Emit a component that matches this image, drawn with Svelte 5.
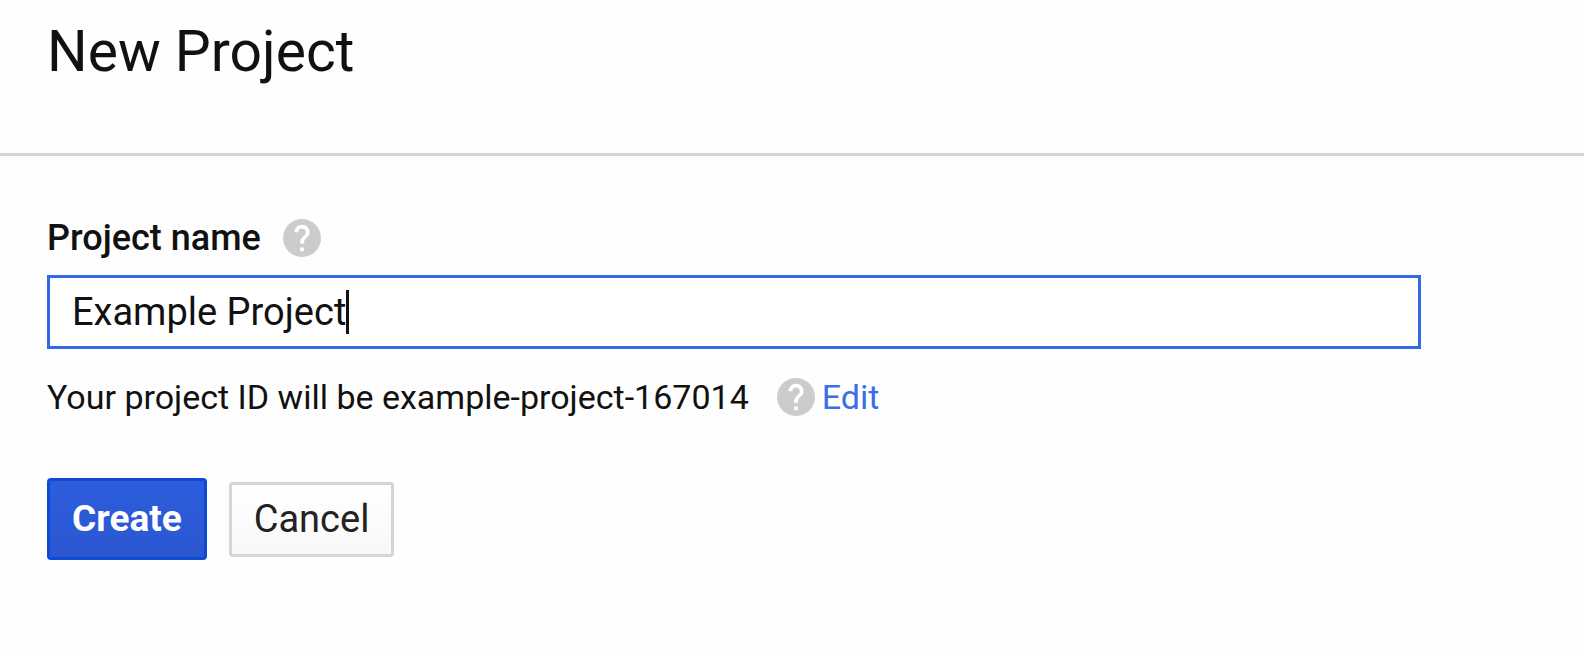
<script>
    let projectName = 'Example Project';
    let projectId = 'example-project-167014';
</script>

{#snippet helpIcon()}
    <svg viewBox="2 2 20 20" aria-hidden="true">
        <circle cx="12" cy="12" r="10" fill="#ccc" />
        <path d="M13 19h-2v-2h2v2zm2.07-7.75l-.9.92C13.45 12.9 13 13.5 13 15h-2v-.5c0-1.1.45-2.1 1.17-2.83l1.24-1.26c.37-.36.59-.86.59-1.41 0-1.1-.9-2-2-2s-2 .9-2 2H8c0-2.21 1.79-4 4-4s4 1.79 4 4c0 .88-.36 1.68-.93 2.25z" fill="#fff" />
    </svg>
{/snippet}

<header>
    <h1>New Project</h1>
</header>

<main>
    <form on:submit|preventDefault>
        <div class="row">
            <label for="project-name">Project name</label>
            <button type="button" class="help" aria-label="About project names">{@render helpIcon()}</button>
        </div>

        <div class="field">
            <input id="project-name" type="text" bind:value={projectName} />
            <span class="caret"></span>
        </div>

        <div class="row project-id">
            <span>Your project ID will be {projectId}</span>
            <button type="button" class="help" aria-label="About project IDs">{@render helpIcon()}</button>
            <a href="#edit">Edit</a>
        </div>

        <div class="actions">
            <button type="submit" class="create">Create</button>
            <button type="button" class="cancel">Cancel</button>
        </div>
    </form>
</main>

<style>
    :global(body) {
        background: #fefefe;
        color: #111;
        font-family: Roboto, sans-serif;
        font-size: 34px;
        line-height: 40px;
    }

    header {
        padding: 20px 47px 69px;
        border-bottom: 3px solid #d5d5d5;
    }

    h1 {
        margin: 0;
        font-size: 57px;
        font-weight: 400;
        line-height: 64px;
    }

    main {
        padding: 62px 163px 62px 47px;
    }

    .row {
        display: flex;
        align-items: center;
    }

    label {
        font-size: 36px;
        font-weight: 500;
    }

    .help {
        width: 38px;
        height: 38px;
        margin-left: 22px;
        padding: 0;
        border: 0;
        background: none;
    }

    .project-id .help {
        margin-left: 28px;
    }

    .help svg {
        display: block;
        width: 38px;
        height: 38px;
    }

    .field {
        display: flex;
        align-items: center;
        margin-top: 17px;
        padding: 12px 22px;
        border: 3px solid #3367e8;
        background: #fff;
    }

    input {
        field-sizing: content;
        height: 44px;
        padding: 0;
        border: 0;
        outline: 0;
        background: none;
        color: inherit;
        font: inherit;
        font-size: 38px;
    }

    .caret {
        width: 3px;
        height: 44px;
        background: #111;
    }

    .project-id {
        margin-top: 28px;
    }

    a {
        margin-left: 7px;
        color: #3b6ee8;
        text-decoration: none;
    }

    .actions {
        display: flex;
        align-items: center;
        gap: 22px;
        margin-top: 61px;
    }

    .create,
    .cancel {
        padding: 0 22px;
        border-radius: 4px;
        font-family: inherit;
        line-height: 44px;
    }

    .create {
        height: 82px;
        border: 3px solid #0d4bd6;
        background: linear-gradient(#2d5ddd, #2b57d0);
        color: #fff;
        font-size: 37px;
        font-weight: 700;
    }

    .cancel {
        height: 75px;
        border: 3px solid #d5d5d5;
        background: linear-gradient(#fff, #f8f8f8);
        color: #222;
        font-size: 38px;
    }
</style>
